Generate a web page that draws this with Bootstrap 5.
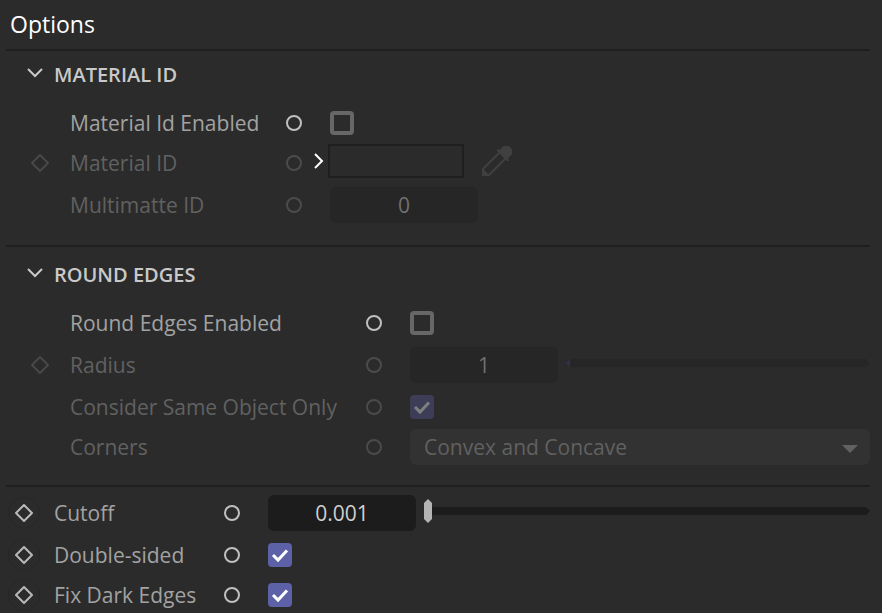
<!DOCTYPE html>
<html lang="en" data-bs-theme="dark">
<head>
<meta charset="utf-8">
<meta name="viewport" content="width=device-width, initial-scale=1">
<title>Options</title>
<link href="https://cdn.jsdelivr.net/npm/bootstrap@5.3.0/dist/css/bootstrap.min.css" rel="stylesheet">
<style>
  :root {
    --panel: #2b2b2b;
    --rule: #1f1f1f;
    --ink: #a2a2a2;
    --ink-off: #616161;
    --accent: #5c61a8;
  }
  body {
    background: var(--panel);
    color: var(--ink);
    font-family: "Segoe UI", "Open Sans", sans-serif;
    font-size: 21px;
    line-height: 28px;
  }
  .panel { padding: 0 12px 0 6px; }
  .panel-title { font-size: 23px; line-height: 49px; color: #fff; padding-left: 4px; }
  .section { border-top: 2px solid var(--rule); --label: 216px; }
  .section-wide { --label: 296px; padding-top: 4px; }
  .section-plain { --label: 170px; padding-top: 6px; }
  .section-body { padding: 6px 0 20px 18px; }
  .section-plain .section-body { padding: 0 0 0 2px; }
  .rows { display: flex; flex-direction: column; gap: 4px; }
  .section-toggle {
    height: 48px; padding: 0 0 0 21px; gap: 11px; border: 0; background: none;
    color: #c9c9c9; font-size: 20px; font-weight: 600;
  }
  .section-toggle svg { margin-bottom: 4px; }
  .prop { height: 36px; display: flex; align-items: center; }
  .prop-tall { height: 40px; }
  .is-off { color: var(--ink-off); }
  .key { width: 32px; height: 32px; margin-right: 14px; flex: none; padding: 0; border: 0; background: none; color: #b9b9b9; display: grid; place-items: center; }
  .key-live { border: 1px solid #272727; border-radius: 50%; }
  .prop-label { width: var(--label); flex: none; white-space: nowrap; }
  .ring { width: 16px; height: 16px; flex: none; padding: 0; border: 2px solid #c0c0c0; border-radius: 50%; background: none; margin-right: 28px; }
  .is-off .ring { border-color: #4b4b4b; }
  .is-off .key { color: #484848; }
  .swatch-row .ring { margin-right: 10px; }
  .expand { width: 16px; padding: 0; border: 0; background: none; color: #fff; display: grid; place-items: center start; }
  .swatch { width: 136px; height: 34px; border: 2px solid var(--rule); background: none; padding: 0; margin-right: 18px; }
  .picker { padding: 0; border: 0; background: none; color: #404040; }
  .tick { appearance: none; width: 24px; height: 24px; flex: none; margin: 0; border: 4px solid #676767; border-radius: 4px; }
  .tick-box { display: grid; place-items: center; }
  .tick-box > * { grid-area: 1 / 1; }
  .tick-box svg { pointer-events: none; color: transparent; }
  .tick:checked { border: 0; background: var(--accent); }
  .tick:checked + svg { color: #fff; }
  .tick:checked:disabled { background: #3d3d57; }
  .tick:checked:disabled + svg { color: #808080; }
  .num { width: 148px; height: 36px; flex: none; border: 0; border-radius: 6px; background: #1c1c1c; color: #cfcfcf; text-align: center; padding: 0; margin-right: 8px; }
  .num:disabled { background: #262626; color: #707070; }
  .slide { display: grid; align-items: center; flex: 1; padding-bottom: 4px; }
  .slide > * { grid-area: 1 / 1; }
  .slide-track { height: 8px; background: #1c1c1c; clip-path: polygon(0 50%, 4px 0, calc(100% - 4px) 0, 100% 50%, calc(100% - 4px) 100%, 4px 100%); }
  .slide-off .slide-track { background: linear-gradient(90deg, #30304c 4px, #262626 4px); }
  .slide input { appearance: none; width: 100%; height: 24px; margin: 0; background: none; }
  .slide input::-webkit-slider-thumb { appearance: none; width: 8px; height: 24px; background: #b4b4b4; clip-path: polygon(50% 0, 100% 4px, 100% 20px, 50% 100%, 0 20px, 0 4px); }
  .slide-off input::-webkit-slider-thumb { visibility: hidden; }
  .pick { display: grid; align-items: center; flex: 1; }
  .pick > * { grid-area: 1 / 1; }
  .pick select { appearance: none; width: 100%; height: 36px; border: 0; border-radius: 6px; background: #323232; color: var(--ink-off); padding: 0 14px; opacity: 1; }
  .pick span { justify-self: end; width: 16px; height: 8px; margin: 4px 12px 0 0; background: #616161; clip-path: polygon(0 0, 100% 0, 50% 100%); pointer-events: none; }
</style>
</head>
<body>
<svg class="d-none" aria-hidden="true">
  <symbol id="diamond" viewBox="0 0 20 20"><path d="M10 2 18 10 10 18 2 10Z" fill="none" stroke="currentColor" stroke-width="2" stroke-linejoin="round"/></symbol>
  <symbol id="down" viewBox="0 0 16 10"><path d="M1 1 8 8 15 1" fill="none" stroke="currentColor" stroke-width="2"/></symbol>
  <symbol id="check" viewBox="0 0 24 24"><path d="M5 12 10 17 19 7.500" fill="none" stroke="currentColor" stroke-width="3"/></symbol>
</svg>
<main class="panel">
  <h1 class="panel-title fw-normal m-0">Options</h1>

  <section class="section">
    <button class="section-toggle d-flex align-items-center" type="button" aria-expanded="true"><svg width="16" height="10"><use href="#down"/></svg>MATERIAL ID</button>
    <div class="section-body rows">
      <div class="prop">
        <span class="key"></span><label class="prop-label" for="mid-on">Material Id Enabled</label>
        <button class="ring" type="button" aria-label="Override Material Id Enabled"></button>
        <div class="tick-box"><input class="tick" type="checkbox" id="mid-on"></div>
      </div>
      <div class="prop is-off swatch-row">
        <button class="key" type="button" aria-label="Key Material ID" disabled><svg width="20" height="20"><use href="#diamond"/></svg></button><label class="prop-label" for="mid">Material ID</label>
        <button class="ring" type="button" aria-label="Override Material ID" disabled></button>
        <div class="d-flex align-items-center pb-1">
          <button class="expand" type="button" aria-label="Expand"><svg width="12" height="18" viewBox="0 0 12 18"><path d="M3 2 10 9 3 16" fill="none" stroke="currentColor" stroke-width="2"/></svg></button>
          <button class="swatch" type="button" id="mid" disabled></button>
          <button class="picker d-flex" type="button" aria-label="Pick colour" disabled><svg width="30" height="30" viewBox="0 0 30 30"><path d="M17 7 1 23V29H7L23 13" fill="none" stroke="currentColor" stroke-width="2"/><path d="M1 23 7 29H1Z" fill="currentColor"/><path d="M15 3 18 4 20 1.500A5.800 5.800 0 0 1 28.500 10L26 12 27 15 25 15 15 5Z" fill="currentColor"/></svg></button>
        </div>
      </div>
      <div class="prop prop-tall is-off">
        <span class="key"></span><label class="prop-label" for="multi">Multimatte ID</label>
        <button class="ring" type="button" aria-label="Override Multimatte ID" disabled></button>
        <input class="num" type="text" id="multi" value="0" disabled>
      </div>
    </div>
  </section>

  <section class="section section-wide">
    <button class="section-toggle d-flex align-items-center" type="button" aria-expanded="true"><svg width="16" height="10"><use href="#down"/></svg>ROUND EDGES</button>
    <div class="section-body rows">
      <div class="prop">
        <span class="key"></span><label class="prop-label" for="edges-on">Round Edges Enabled</label>
        <button class="ring" type="button" aria-label="Override Round Edges Enabled"></button>
        <div class="tick-box"><input class="tick" type="checkbox" id="edges-on"></div>
      </div>
      <div class="prop prop-tall is-off">
        <button class="key" type="button" aria-label="Key Radius" disabled><svg width="20" height="20"><use href="#diamond"/></svg></button><label class="prop-label" for="radius">Radius</label>
        <button class="ring" type="button" aria-label="Override Radius" disabled></button>
        <input class="num" type="text" id="radius" value="1" disabled>
        <div class="slide slide-off"><span class="slide-track"></span><input type="range" aria-label="Radius slider" value="0" disabled></div>
      </div>
      <div class="prop is-off">
        <span class="key"></span><label class="prop-label" for="same">Consider Same Object Only</label>
        <button class="ring" type="button" aria-label="Override Consider Same Object Only" disabled></button>
        <div class="tick-box"><input class="tick" type="checkbox" id="same" checked disabled><svg width="24" height="24"><use href="#check"/></svg></div>
      </div>
      <div class="prop is-off">
        <span class="key"></span><label class="prop-label" for="corners">Corners</label>
        <button class="ring" type="button" aria-label="Override Corners" disabled></button>
        <div class="pick"><select id="corners" disabled><option>Convex and Concave</option></select><span></span></div>
      </div>
    </div>
  </section>

  <section class="section section-plain">
    <div class="section-body rows">
      <div class="prop prop-tall">
        <button class="key key-live" type="button" aria-label="Key Cutoff"><svg width="20" height="20"><use href="#diamond"/></svg></button><label class="prop-label" for="cutoff">Cutoff</label>
        <button class="ring" type="button" aria-label="Override Cutoff"></button>
        <input class="num" type="text" id="cutoff" value="0.001">
        <div class="slide"><span class="slide-track"></span><input type="range" aria-label="Cutoff slider" value="0"></div>
      </div>
      <div class="prop">
        <button class="key key-live" type="button" aria-label="Key Double-sided"><svg width="20" height="20"><use href="#diamond"/></svg></button><label class="prop-label" for="double">Double-sided</label>
        <button class="ring" type="button" aria-label="Override Double-sided"></button>
        <div class="tick-box"><input class="tick" type="checkbox" id="double" checked><svg width="24" height="24"><use href="#check"/></svg></div>
      </div>
      <div class="prop">
        <button class="key key-live" type="button" aria-label="Key Fix Dark Edges"><svg width="20" height="20"><use href="#diamond"/></svg></button><label class="prop-label" for="dark">Fix Dark Edges</label>
        <button class="ring" type="button" aria-label="Override Fix Dark Edges"></button>
        <div class="tick-box"><input class="tick" type="checkbox" id="dark" checked><svg width="24" height="24"><use href="#check"/></svg></div>
      </div>
    </div>
  </section>
</main>
<script src="https://cdn.jsdelivr.net/npm/bootstrap@5.3.0/dist/js/bootstrap.bundle.min.js"></script>
</body>
</html>
